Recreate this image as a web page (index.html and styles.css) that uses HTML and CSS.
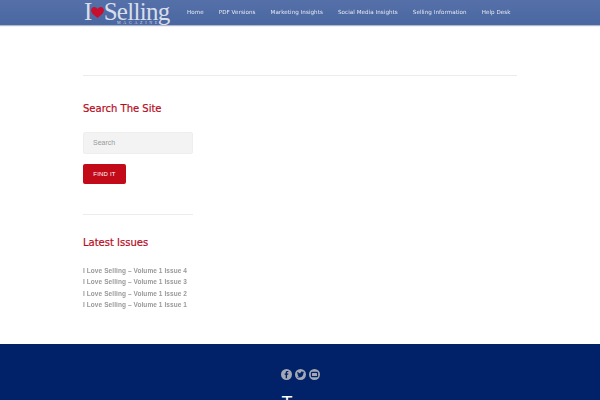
FILE: index.html
```html
<!DOCTYPE html>
<html lang="en">
<head>
    <meta charset="UTF-8">
    <meta name="viewport" content="width=device-width, initial-scale=1.0">
    <title>I Love Selling Magazine</title>
    <link rel="stylesheet" href="styles.css">
</head>
<body>
    <header class="site-header">
        <div class="wrap header-inner">
            <a class="logo" href="#">
                <span class="logo-main">I<svg class="logo-heart" viewBox="0 0 14 12" aria-hidden="true"><path d="M7 12C4 9.200 0 7 0 3.500 0 1.400 1.600 0 3.500 0 5 0 6.300 .8 7 2.200 7.700 .8 9 0 10.500 0 12.400 0 14 1.400 14 3.500 14 7 10 9.200 7 12Z"/></svg>Selling</span>
                <span class="logo-sub">MAGAZINE</span>
            </a>
            <nav class="main-nav">
                <a href="#">Home</a>
                <a href="#">PDF Versions</a>
                <a href="#">Marketing Insights</a>
                <a href="#">Social Media Insights</a>
                <a href="#">Selling Information</a>
                <a href="#">Help Desk</a>
            </nav>
        </div>
    </header>

    <main class="wrap content">
        <hr class="rule">
        <aside class="sidebar">
            <h3>Search The Site</h3>
            <form class="search-form">
                <input type="text" placeholder="Search">
                <button type="button">FIND IT</button>
            </form>
            <hr class="rule side-rule">
            <h3>Latest Issues</h3>
            <ul class="issues">
                <li><a href="#">I Love Selling – Volume 1 Issue 4</a></li>
                <li><a href="#">I Love Selling – Volume 1 Issue 3</a></li>
                <li><a href="#">I Love Selling – Volume 1 Issue 2</a></li>
                <li><a href="#">I Love Selling – Volume 1 Issue 1</a></li>
            </ul>
        </aside>
    </main>

    <footer class="site-footer">
        <div class="social">
            <a href="#" aria-label="Facebook"><svg viewBox="0 0 12 12"><path d="M6.600 10V6.400H7.800L8 5H6.600V4.100C6.600 3.700 6.700 3.400 7.300 3.400H8V2.200C7.800 2.200 7.400 2.100 6.900 2.100 5.800 2.100 5.100 2.800 5.100 3.900V5H4V6.400H5.100V10Z"/></svg></a>
            <a href="#" aria-label="Twitter"><svg viewBox="0 0 12 12"><path d="M10 3.500C9.700 3.600 9.400 3.700 9.100 3.700 9.400 3.500 9.700 3.200 9.800 2.800 9.500 3 9.100 3.100 8.800 3.200 8.500 2.900 8.100 2.700 7.600 2.700 6.700 2.700 6 3.400 6 4.300 6 4.400 6 4.600 6 4.700 4.700 4.600 3.500 4 2.700 3 2.200 3.800 2.500 4.700 3.200 5.200 2.900 5.200 2.700 5.100 2.500 5 2.500 5.800 3 6.500 3.800 6.600 3.500 6.700 3.300 6.700 3.100 6.700 3.300 7.300 3.900 7.800 4.600 7.800 3.800 8.400 2.900 8.700 2 8.600 4.700 10.300 9.200 9 9.200 4.400 9.500 4.200 9.800 3.900 10 3.500Z"/></svg></a>
            <a href="#" aria-label="YouTube"><svg viewBox="0 0 12 12"><path fill-rule="evenodd" d="M3.500 3H8.500C9.300 3 10 3.700 10 4.500V7.500C10 8.300 9.300 9 8.500 9H3.500C2.700 9 2 8.300 2 7.500V4.500C2 3.700 2.700 3 3.500 3ZM4 4.300C3.500 4.300 3.200 4.600 3.200 5V7C3.200 7.400 3.500 7.700 4 7.700H8C8.500 7.700 8.800 7.400 8.800 7V5C8.800 4.600 8.500 4.300 8 4.300Z"/></svg></a>
        </div>
        <h2 class="footer-title">T</h2>
    </footer>
</body>
</html>
```

FILE: styles.css
```css
html, body {
    height: 400px;
    overflow: hidden;
}
body {
    margin: 0;
    font-family: "Liberation Sans", Arial, sans-serif;
    background-color: #fff;
}
a {
    text-decoration: none;
}
.wrap {
    width: 434px;
    margin: 0 auto;
}
.site-header {
    height: 25px;
    background: linear-gradient(#5570a9, #4a67a1);
    box-shadow: 0 1px 1px rgba(30, 50, 100, 0.35);
}
.header-inner {
    display: flex;
    align-items: flex-start;
}
.logo {
    display: flex;
    flex-direction: column;
    width: 104px;
    height: 25px;
    flex-shrink: 0;
    color: #d8deea;
    font-family: "Liberation Serif", serif;
}
.logo-main {
    display: flex;
    align-items: center;
    padding-left: 1px;
    font-size: 25px;
    line-height: 24px;
    letter-spacing: -0.7px;
}
.logo-heart {
    width: 13px;
    height: 11px;
    margin: 1px 0 0 -1px;
    flex-shrink: 0;
    fill: #c8102e;
}
.logo-sub {
    margin-top: -4px;
    padding-left: 34px;
    font-size: 4px;
    line-height: 5px;
    letter-spacing: 2.700px;
}
.main-nav {
    display: flex;
    gap: 15px;
    line-height: 24px;
    will-change: transform;
}
.main-nav a {
    color: #e6eaf3;
    font-family: "DejaVu Sans", sans-serif;
    font-size: 5.600px;
    letter-spacing: 0.05px;
    white-space: nowrap;
}
.content {
    height: 319px;
    overflow: hidden;
}
.rule {
    height: 1px;
    margin: 0;
    border: 0;
    background-color: #ececec;
}
.content > .rule {
    margin-top: 50px;
}
.sidebar {
    width: 110px;
}
.sidebar h3 {
    margin: 0;
    color: #b80b1c;
    font-family: "DejaVu Sans", sans-serif;
    font-size: 10px;
    font-weight: 400;
    line-height: 14px;
    white-space: nowrap;
    -webkit-text-stroke: 0.2px #b80b1c;
}
.sidebar > h3:first-child {
    margin-top: 26px;
}
.search-form {
    margin-top: 16px;
}
.search-form input {
    display: block;
    box-sizing: border-box;
    width: 110px;
    height: 22px;
    padding: 0 9px 2px;
    border: 1px solid #eee;
    border-radius: 2px;
    background-color: #f3f3f3;
    font-family: inherit;
    font-size: 7px;
}
.search-form input::placeholder {
    color: #999;
    opacity: 1;
}
.search-form button {
    display: block;
    width: 43px;
    height: 20px;
    margin-top: 10px;
    padding: 0;
    border: 0;
    border-radius: 2px;
    background-color: #c20a18;
    color: #fff;
    font-family: inherit;
    font-size: 6px;
    letter-spacing: 0.2px;
}
.side-rule {
    margin-top: 30px;
}
.side-rule + h3 {
    margin-top: 21px;
}
.issues {
    margin: 11.500px 0 0;
    padding: 0;
    list-style: none;
    will-change: transform;
}
.issues li {
    height: 11.400px;
    line-height: 11.400px;
}
.issues a {
    color: #999;
    font-size: 6.500px;
    font-weight: 700;
    letter-spacing: 0.08px;
    white-space: nowrap;
}
.site-footer {
    height: 56px;
    overflow: hidden;
    background-color: #012169;
    text-align: center;
}
.social {
    display: flex;
    justify-content: center;
    gap: 3px;
    padding-top: 25px;
}
.social a {
    display: block;
    width: 11px;
    height: 11px;
    border-radius: 50%;
    background-color: #a3a8b4;
}
.social svg {
    display: block;
    width: 11px;
    height: 11px;
    fill: #012169;
}
.footer-title {
    margin: 13px 26px 0 0;
    color: #fff;
    font-size: 18px;
    font-weight: 400;
    line-height: 20px;
}
```
